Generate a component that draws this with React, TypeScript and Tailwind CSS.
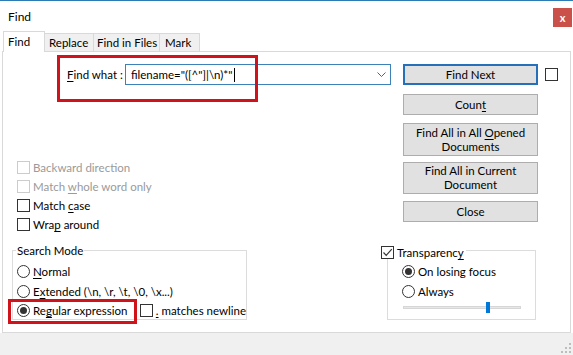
import React from 'react';

type BoxProps = { checked?: boolean; disabled?: boolean };

const CheckBox = ({ checked = false, disabled = false }: BoxProps) => (
  <span
    className={
      disabled
        ? 'flex h-[13px] w-[13px] shrink-0 items-center justify-center border border-[#cccccc] bg-white'
        : 'flex h-[13px] w-[13px] shrink-0 items-center justify-center border border-[#333333] bg-white'
    }
  >
    {checked && (
      <svg width="11" height="11" viewBox="0 0 11 11">
        <path d="M1.5 5.5 L4.2 8.3 L9.8 2.2" fill="none" stroke="#333333" strokeWidth="1.2" />
      </svg>
    )}
  </span>
);

const Radio = ({ checked = false }: { checked?: boolean }) => (
  <span className="flex h-[13px] w-[13px] shrink-0 items-center justify-center rounded-full border border-[#333333] bg-white">
    {checked && <span className="h-[7px] w-[7px] rounded-full bg-[#333333]" />}
  </span>
);

const U = ({ children }: { children: React.ReactNode }) => (
  <span className="underline decoration-1 underline-offset-[2px]">{children}</span>
);

const Button = ({ children, tall = false }: { children: React.ReactNode; tall?: boolean }) => (
  <div
    className={
      tall
        ? 'flex h-[33px] w-[135px] items-center justify-center border border-[#adadad] bg-[#e1e1e1] text-center leading-[14px]'
        : 'flex h-[21px] w-[135px] items-center justify-center border border-[#adadad] bg-[#e1e1e1] text-center'
    }
  >
    {children}
  </div>
);

export default function App() {
  return (
    <div className="relative h-[355px] w-[573px] overflow-hidden whitespace-nowrap bg-white font-['Lato',sans-serif] text-[11.5px] leading-[15px] text-black">
      {/* title bar */}
      <div className="flex h-[31px] items-start justify-between border-t border-[#2b7bb5] pl-[8px] pr-[1px]">
        <span className="mt-[8px] text-[12px]">Find</span>
        <div className="mt-[7px] flex h-[19px] w-[19px] items-center justify-center bg-[#c9514a] text-[11px] font-bold leading-none text-white">
          x
        </div>
      </div>

      {/* tabs */}
      <div className="flex h-[20px] items-end pl-[3px]">
        <div className="relative z-10 mb-[-1px] flex h-[21px] w-[42px] items-start border border-b-0 border-[#d9d9d9] bg-white pl-[4px] pt-[2px]">
          Find
        </div>
        <div className="flex h-[18px] w-[49px] items-center border border-b-0 border-l-0 border-[#d9d9d9] bg-[#f0f0f0] pl-[4px]">
          Replace
        </div>
        <div className="flex h-[18px] w-[66px] items-center border border-b-0 border-l-0 border-[#d9d9d9] bg-[#f0f0f0] pl-[3px]">
          Find in Files
        </div>
        <div className="flex h-[18px] w-[40px] items-center border border-b-0 border-l-0 border-[#d9d9d9] bg-[#f0f0f0] pl-[5px]">
          Mark
        </div>
      </div>

      {/* panel */}
      <div className="relative mx-[2px] h-[282px] border border-[#d9d9d9] bg-white">
        <div className="flex">
          {/* left column */}
          <div className="w-[400px]">
            <div className="mt-[12px] flex h-[21px] items-center pl-[64px]">
              <span className="w-[58px]">
                <U>F</U>ind what :
              </span>
              <div className="flex h-[21px] w-[266px] items-center justify-between border border-[#3c82b8] pl-[5px] pr-[4px]">
                <span className="flex items-center">
                  {'filename="([^"]|\\n)*"'}
                  <span className="ml-[1px] h-[14px] w-[1px] bg-black" />
                </span>
                <svg width="9" height="5" viewBox="0 0 9 5">
                  <path d="M0.5 0.5 L4.5 4.5 L8.5 0.5" fill="none" stroke="#606060" strokeWidth="1" />
                </svg>
              </div>
            </div>

            <div className="mt-[73px] pl-[14px]">
              <div className="flex h-[19px] items-center gap-[3px] text-[#9a9a9a]">
                <CheckBox disabled />
                <span>Backward direction</span>
              </div>
              <div className="flex h-[19px] items-center gap-[3px] text-[#9a9a9a]">
                <CheckBox disabled />
                <span>
                  Match <U>w</U>hole word only
                </span>
              </div>
              <div className="flex h-[19px] items-center gap-[3px]">
                <CheckBox />
                <span>
                  Match <U>c</U>ase
                </span>
              </div>
              <div className="flex h-[19px] items-center gap-[3px]">
                <CheckBox />
                <span>
                  Wra<U>p</U> around
                </span>
              </div>
            </div>
          </div>

          {/* right column */}
          <div className="mt-[12px] flex flex-col">
            <div className="flex items-center">
              <div className="flex h-[21px] w-[135px] items-center justify-center border-2 border-[#2670b9] bg-[#e1e1e1]">
                Find Next
              </div>
              <span className="ml-[7px]">
                <CheckBox />
              </span>
            </div>
            <div className="mt-[9px]">
              <Button>
                Coun<U>t</U>
              </Button>
            </div>
            <div className="mt-[8px]">
              <Button tall>
                <span>
                  Find All in All <U>O</U>pened
                  <br />
                  Documents
                </span>
              </Button>
            </div>
            <div className="mt-[6px]">
              <div className="flex h-[32px] w-[135px] items-center justify-center border border-[#adadad] bg-[#e1e1e1] text-center leading-[14px]">
                <span>
                  Find All in Current
                  <br />
                  Document
                </span>
              </div>
            </div>
            <div className="mt-[7px]">
              <Button>Close</Button>
            </div>
          </div>
        </div>

        {/* bottom row */}
        <div className="flex items-start">
          {/* search mode */}
          <div className="ml-[9px] mt-[16px] h-[70px] w-[235px] border border-[#dcdcdc] pl-[3px]">
            <span className="-mt-[8px] block w-fit bg-white px-[1px]">Search Mode</span>
            <div className="mt-[3px] pl-[1px]">
              <div className="flex h-[20px] items-center gap-[3px]">
                <Radio />
                <span>
                  <U>N</U>ormal
                </span>
              </div>
              <div className="flex h-[20px] items-center gap-[3px]">
                <Radio />
                <span>
                  E<U>x</U>tended (\n, \r, \t, \0, \x...)
                </span>
              </div>
              <div className="flex h-[19px] items-center">
                <div className="flex w-[123px] items-center gap-[3px]">
                  <Radio checked />
                  <span>
                    Re<U>g</U>ular expression
                  </span>
                </div>
                <CheckBox />
                <span className="ml-[3px]">
                  <U>.</U> matches newline
                </span>
              </div>
            </div>
          </div>

          {/* transparency */}
          <div className="ml-[134px] mt-[12px]">
            <div className="relative z-10 flex h-[13px] w-fit items-center gap-[3px] bg-white pr-[2px]">
              <CheckBox checked />
              <span>
                Transparenc<U>y</U>
              </span>
            </div>
            <div className="ml-[6px] -mt-[9px] h-[70px] w-[149px] border border-[#dcdcdc] pl-[14px]">
              <div className="mt-[10px] flex h-[20px] items-center gap-[3px]">
                <Radio checked />
                <span>On losing focus</span>
              </div>
              <div className="flex h-[20px] items-center gap-[3px]">
                <Radio />
                <span>Always</span>
              </div>
              <div className="relative ml-[1px] mt-[1px] flex h-[11px] w-[118px] items-center">
                <div className="h-[3px] w-full border border-[#d6d6d6] bg-[#e7e7e7]" />
                <div className="absolute left-[83px] top-0 h-[11px] w-[4px] bg-[#0078d7]" />
              </div>
            </div>
          </div>
        </div>

        {/* red highlight overlays */}
        <div className="absolute left-[54px] top-[3px] h-[47px] w-[201px] border-[3px] border-[#d0121b]" />
        <div className="absolute left-[5px] top-[247px] h-[25px] w-[129px] border-[3px] border-[#d0121b]" />
      </div>

      {/* bottom strip */}
      <div className="flex h-[22px] items-end justify-end bg-[#f0f0f0] pb-[1px] pr-[1px]">
        <svg width="11" height="11" viewBox="0 0 11 11">
          <g fill="#bdbdbd">
            <rect x="8" y="0" width="2" height="2" />
            <rect x="4" y="4" width="2" height="2" />
            <rect x="8" y="4" width="2" height="2" />
            <rect x="0" y="8" width="2" height="2" />
            <rect x="4" y="8" width="2" height="2" />
            <rect x="8" y="8" width="2" height="2" />
          </g>
        </svg>
      </div>
    </div>
  );
}
